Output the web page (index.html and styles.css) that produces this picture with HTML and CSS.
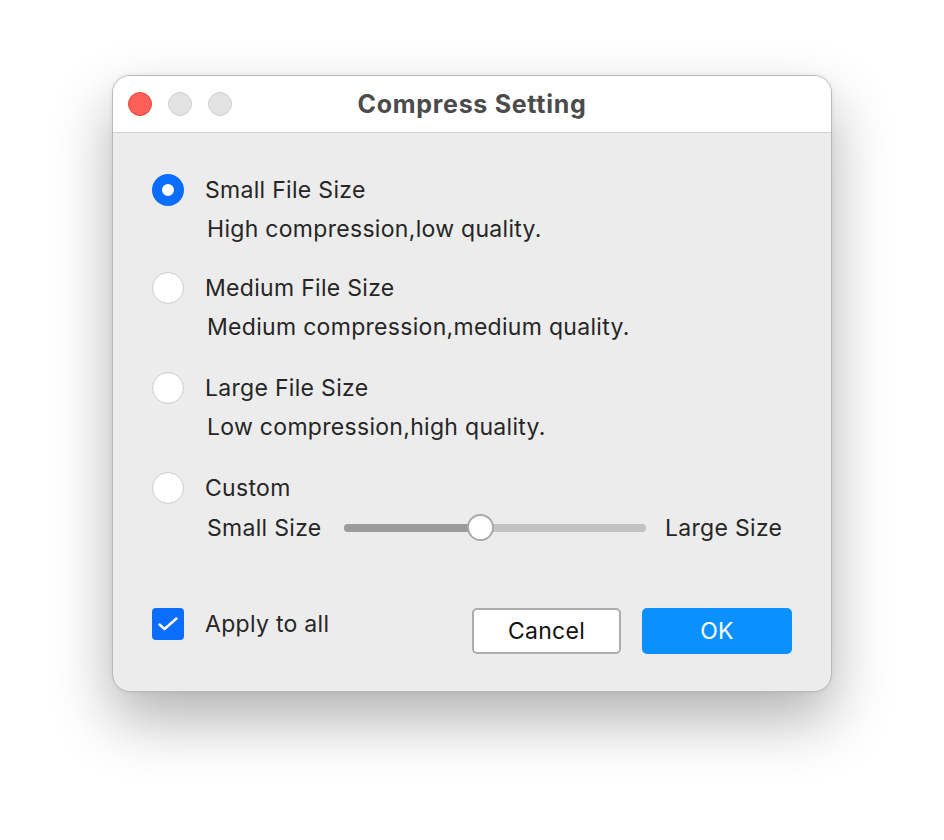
FILE: index.html
```html
<!DOCTYPE html>
<html>
<head>
<meta charset="utf-8">
<link rel="stylesheet" href="styles.css">
</head>
<body>
<div class="window">
  <div class="titlebar">
    <div class="lights">
      <span class="light red"></span>
      <span class="light gray"></span>
      <span class="light gray"></span>
    </div>
    <div class="title">Compress Setting</div>
  </div>
  <div class="content">
    <div class="option">
      <div class="row"><span class="radio checked"></span><span class="label">Small File Size</span></div>
      <div class="desc">High compression,low quality.</div>
    </div>
    <div class="option">
      <div class="row"><span class="radio"></span><span class="label">Medium File Size</span></div>
      <div class="desc">Medium compression,medium quality.</div>
    </div>
    <div class="option">
      <div class="row"><span class="radio"></span><span class="label">Large File Size</span></div>
      <div class="desc">Low compression,high quality.</div>
    </div>
    <div class="option custom">
      <div class="row"><span class="radio"></span><span class="label">Custom</span></div>
      <div class="slider-row">
        <span class="slabel min">Small Size</span>
        <div class="track">
          <div class="fill" style="width:45%"></div>
          <div class="knob" style="left:45%"></div>
        </div>
        <span class="slabel">Large Size</span>
      </div>
    </div>
    <div class="footer">
      <div class="check-wrap">
        <span class="checkbox">
          <svg width="32" height="32" viewBox="0 0 32 32"><path d="M7.5 16.5 L12.5 21 L24.5 10.5" fill="none" stroke="#fff" stroke-width="2.4" stroke-linecap="round" stroke-linejoin="round"/></svg>
        </span>
        <span class="label">Apply to all</span>
      </div>
      <div class="buttons">
        <button class="btn cancel">Cancel</button>
        <button class="btn ok">OK</button>
      </div>
    </div>
  </div>
</div>
</body>
</html>
```

FILE: styles.css
```css
html, body {
  margin: 0;
  padding: 0;
  background: #ffffff;
}
body {
  font-family: Inter, "Noto Sans", "Liberation Sans", sans-serif;
  padding-top: 75px;
  padding-left: 112px;
  min-height: 840px;
  box-sizing: border-box;
}
.window {
  width: 720px;
  height: 617px;
  box-sizing: border-box;
  border-radius: 18px;
  background: #ececec;
  border: 1px solid #b9b9b9;
  box-shadow: 0 28px 60px rgba(0,0,0,0.30), 0 0 4px rgba(0,0,0,0.08);
  overflow: hidden;
  display: flex;
  flex-direction: column;
}
.titlebar {
  height: 56px;
  background: #ffffff;
  border-bottom: 1px solid #d2d2d2;
  position: relative;
  display: flex;
  align-items: center;
  justify-content: center;
  flex-shrink: 0;
}
.lights {
  position: absolute;
  left: 15px;
  top: 16px;
  display: flex;
  gap: 16px;
}
.light {
  width: 24px;
  height: 24px;
  border-radius: 50%;
  box-sizing: border-box;
}
.light.red {
  background: #fe5f57;
  border: 1px solid #e2463f;
}
.light.gray {
  background: #e3e3e3;
  border: 1px solid #d0d0d0;
}
.title {
  font-size: 25px;
  font-weight: 700;
  letter-spacing: 0.7px;
  color: #4b4b4b;
}
.content {
  padding: 41px 39px 0 39px;
  display: flex;
  flex-direction: column;
  color: #262626;
}
.option {
  margin-bottom: 31px;
}
.option:first-child {
  margin-bottom: 29px;
}
.row {
  display: flex;
  align-items: center;
  height: 32px;
}
.radio {
  width: 32px;
  height: 32px;
  box-sizing: border-box;
  border-radius: 50%;
  background: #fff;
  border: 1px solid #cdcdcd;
  margin-right: 21px;
  flex-shrink: 0;
}
.radio.checked {
  background: #fff;
  border: 10px solid #0a6dfe;
}
.label, .desc, .slabel {
  font-size: 23px;
  line-height: 28px;
  letter-spacing: 0.3px;
}
.desc {
  margin-top: 9px;
  padding-left: 55px;
}
.option.custom {
  margin-bottom: 0;
}
.slider-row {
  display: flex;
  align-items: center;
  height: 28px;
  margin-top: 10px;
  padding-left: 55px;
}
.slabel.min {
  width: 137px;
  flex-shrink: 0;
}
.track {
  position: relative;
  width: 302px;
  height: 8px;
  border-radius: 4px;
  background: #c2c2c2;
  margin-right: 19px;
  flex-shrink: 0;
}
.fill {
  height: 8px;
  border-radius: 4px;
  background: #9b9b9b;
}
.knob {
  position: absolute;
  top: -10px;
  width: 27px;
  height: 27px;
  margin-left: -13px;
  box-sizing: border-box;
  border-radius: 50%;
  background: #fff;
  border: 2px solid #a9a9a9;
}
.footer {
  margin-top: 66px;
  display: flex;
  justify-content: space-between;
  align-items: flex-start;
}
.check-wrap {
  display: flex;
  align-items: center;
  height: 32px;
}
.checkbox {
  width: 32px;
  height: 32px;
  border-radius: 4px;
  background: #0a6dfe;
  margin-right: 21px;
  flex-shrink: 0;
}
.checkbox svg {
  display: block;
}
.buttons {
  display: flex;
  gap: 21px;
}
.btn {
  font-family: Inter, "Noto Sans", "Liberation Sans", sans-serif;
  font-size: 23px;
  letter-spacing: 0.3px;
  height: 46px;
  box-sizing: border-box;
  border-radius: 5px;
  padding: 0;
  cursor: default;
}
.btn.cancel {
  width: 149px;
  background: #ffffff;
  border: 2px solid #acacac;
  color: #111;
}
.btn.ok {
  width: 150px;
  background: #0a90ff;
  border: none;
  color: #ffffff;
}
```
